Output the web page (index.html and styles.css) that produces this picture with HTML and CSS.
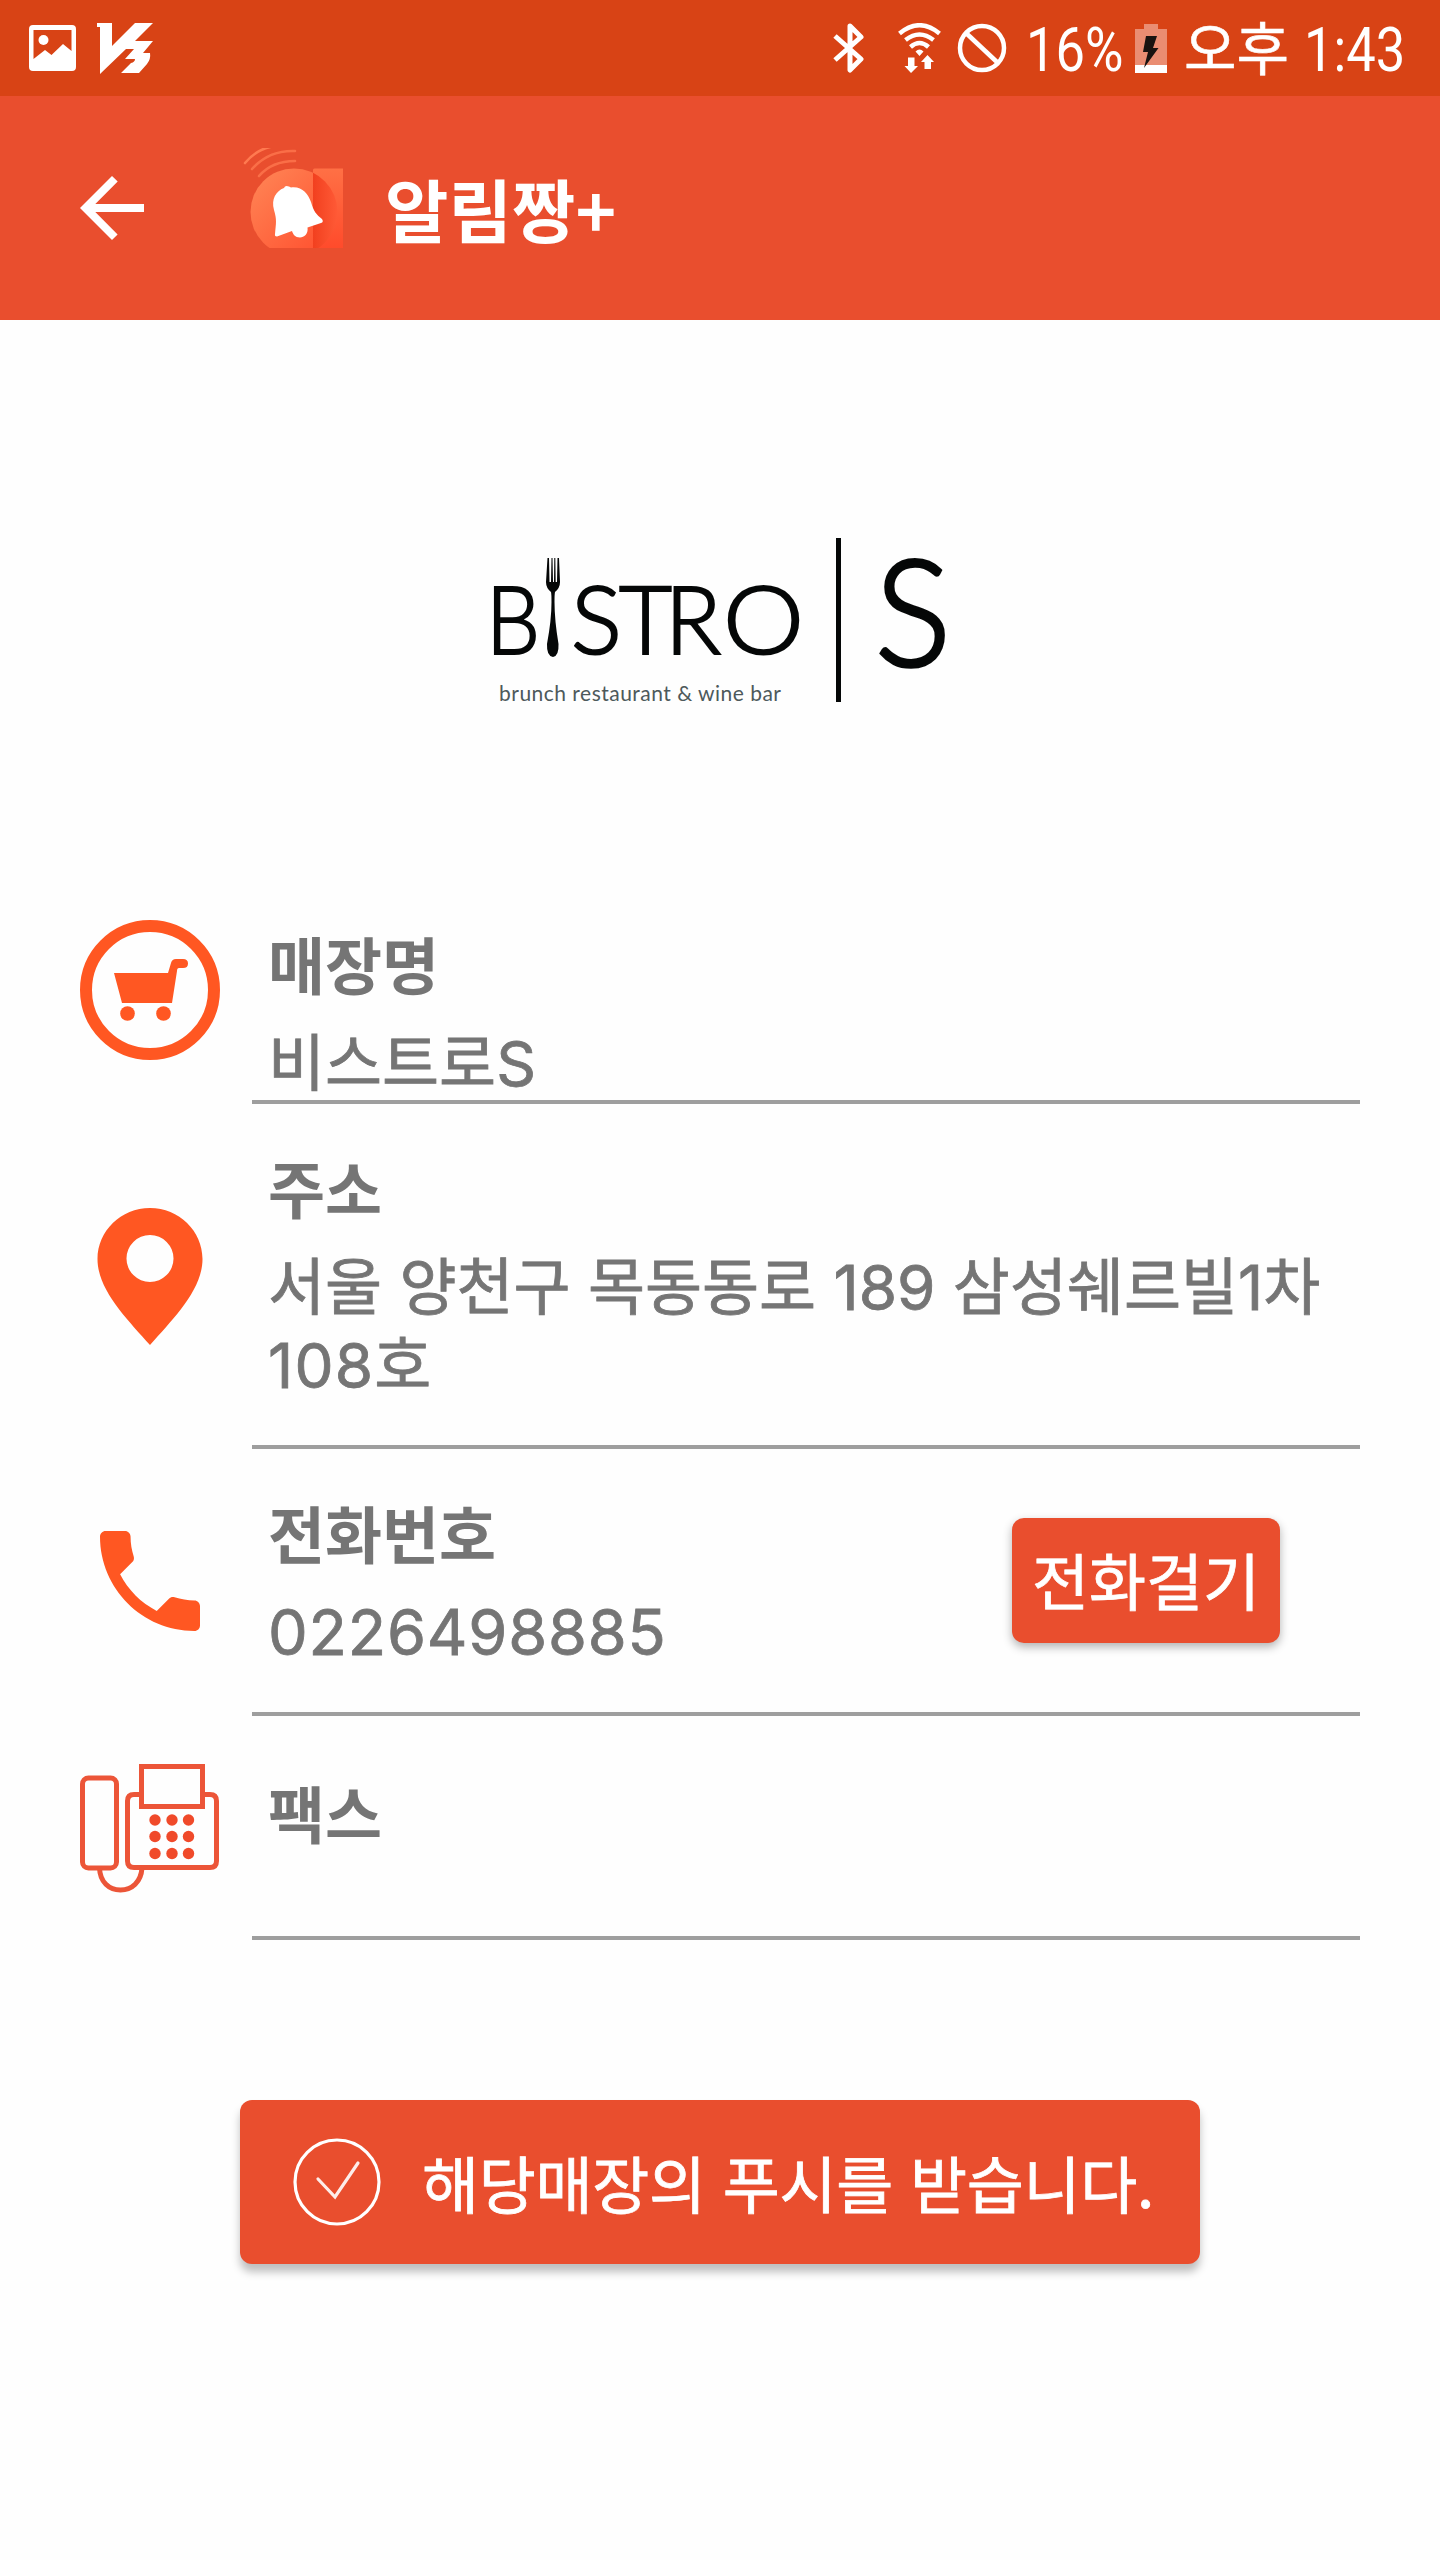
FILE: index.html
```html
<!DOCTYPE html>
<html lang="ko">
<head>
    <meta charset="UTF-8">
    <meta name="viewport" content="width=device-width, initial-scale=1.0">
    <title>알림짱+</title>
    <link rel="stylesheet" href="styles.css">
</head>
<body>

<div class="status-bar">
    <svg class="icon-picture" viewBox="0 0 47 46">
        <path fill="#fff" fill-rule="evenodd" d="M4 0H43Q47 0 47 4V42Q47 46 43 46H4Q0 46 0 42V4Q0 0 4 0ZM4.500 5V34L16 25L22.500 30L34 19L42.500 26V5Z"/>
        <circle cx="14.500" cy="15" r="5" fill="#fff"/>
    </svg>
    <svg class="icon-v3" viewBox="0 0 56 51">
        <path fill="#fff" d="M0 0H15V23L38 0H56L38 18H56L46 30L53 30Q54 36 50 41L42 50H24L34 40Q38 39 38 36H28L37 26H29L3 51V4H0Z"/>
    </svg>
    <div class="status-right">
        <svg class="icon-bluetooth" viewBox="0 0 32 50">
            <path d="M2 13L28 36L17 47V3L28 14L2 37" fill="none" stroke="#fff" stroke-width="5" stroke-linejoin="round"/>
        </svg>
        <svg class="icon-wifi" viewBox="0 0 43 50">
            <g fill="none" stroke="#fff" stroke-width="4.500">
                <path d="M1.500 10.500Q21.500 -6 41.500 10.500"/>
                <path d="M7.500 17Q21.500 6 35.500 17"/>
                <path d="M12.500 24Q21.500 16 30.500 24"/>
            </g>
            <path fill="#fff" d="M17.500 28.500Q21.500 24.500 25.500 28.500L21.500 33ZM10 34.500H16.500V43H20L13 50L6.500 43H10ZM26.500 46H33V39H36L29.500 32L23 39H26.500Z"/>
        </svg>
        <svg class="icon-block" viewBox="0 0 50 50">
            <g fill="none" stroke="#fff" stroke-width="4.500">
                <circle cx="25" cy="25" r="22"/>
                <path d="M9 10L41 40"/>
            </g>
        </svg>
        <span class="status-text battery-text"><span>16%</span></span>
        <svg class="icon-battery" viewBox="0 0 32 49">
            <path fill="#ea8d72" d="M9 0H23V5H32V49H0V5H9Z"/>
            <path fill="#fff" d="M0 41H32V49H0Z"/>
            <path fill="#1a1310" d="M11 12H22L18 24H23.500L9 44L13 28H8Z"/>
        </svg>
        <span class="status-text ampm">오후</span>
        <span class="status-text clock"><span>1:43</span></span>
    </div>
</div>

<div class="header">
    <svg class="icon-back" viewBox="0 0 64 64">
        <path fill="#fff" d="M64 28H15.300L37.700 5.600L32 0L0 32L32 64L37.600 58.400L15.300 36H64Z"/>
    </svg>
    <svg class="app-logo" viewBox="0 0 100 100">
        <defs>
            <linearGradient id="ball" x1="0" y1="0" x2="1" y2="1">
                <stop offset="0" stop-color="#ff8757"/>
                <stop offset="1" stop-color="#ff4b2b"/>
            </linearGradient>
            <linearGradient id="bar" x1="0" y1="0" x2="0" y2="1">
                <stop offset="0" stop-color="#ff7045"/>
                <stop offset="1" stop-color="#ff4b2b"/>
            </linearGradient>
            <linearGradient id="shade" x1="0.720" y1="0" x2="1" y2="0">
                <stop offset="0" stop-color="#f2401f"/>
                <stop offset="1" stop-color="#ff5a36"/>
            </linearGradient>
            <clipPath id="bar-clip"><rect x="70" y="20.500" width="30" height="80"/></clipPath>
        </defs>
        <g fill="none" stroke="#ff7a50" stroke-width="2.600" stroke-linecap="round">
            <path d="M2 15Q13 2 27 -1"/>
            <path d="M9 21Q26 2 52 3" opacity=".75"/>
            <path d="M16 28Q29 13 52 13" opacity=".75"/>
        </g>
        <circle cx="51" cy="64" r="43.500" fill="url(#ball)"/>
        <rect x="70" y="20.500" width="31" height="80" rx="1.500" fill="url(#bar)"/>
        <circle cx="51" cy="64" r="43.500" fill="url(#shade)" clip-path="url(#bar-clip)"/>
        <path fill="#fff" d="M41 40Q42 37 46 38.500L48 39.500C59 38 65 46 68 54C71 64 73 66 79 71Q81 74 78 75L64.500 79.500C65.500 86 61 89.500 57 89.500C52 89.500 50 86 49 83L34 88.500Q31.500 88.500 32 86C33 75 34 72 31 62C28 51 33 43 41 40Z"/>
    </svg>
    <h1>알림짱+</h1>
</div>

<div class="store-logo">
    <svg viewBox="0 0 500 220">
        <g class="logo-name">
            <text x="16" y="144" textLength="54" lengthAdjust="spacingAndGlyphs">B</text>
            <text x="101" y="144">S</text>
            <text x="149" y="144" textLength="53" lengthAdjust="spacingAndGlyphs">T</text>
            <text x="195" y="144" textLength="56" lengthAdjust="spacingAndGlyphs">R</text>
            <text x="253" y="144" textLength="81" lengthAdjust="spacingAndGlyphs">O</text>
        </g>
        <!-- fork in place of the letter I -->
        <path fill="#050707" d="M77.500 48L79 48L79.500 72H81L81.500 48H82.500L83 72H84L84.300 48H85.300L85.700 72H87L87.500 48H89L90 72Q90 78 85 82Q84.500 84 84.500 92Q84.500 110 88.500 134Q89 146 83 147Q76.500 146 77 134Q81.500 110 81.500 92Q81.500 84 81 82Q76 78 76 72Z"/>
        <rect x="366" y="28" width="5" height="164" fill="#050707"/>
        <text class="logo-initial" x="405" y="156" textLength="76" lengthAdjust="spacingAndGlyphs">S</text>
        <text class="logo-tagline" x="29" y="191" textLength="282">brunch restaurant &amp; wine bar</text>
    </svg>
</div>

<div class="info">
    <div class="row row-name">
        <div class="row-icon">
            <svg width="140" height="140" viewBox="0 0 140 140">
                <circle cx="70" cy="70" r="64" fill="none" stroke="#ff5722" stroke-width="12"/>
                <path fill="#ff5722" d="M34 53H88L91 43Q92 39 96 39H103Q108 39 108 43.500Q108 48 103 48H99Q97 48 97 51L92 83H42Z"/>
                <circle cx="47.500" cy="93.500" r="7.300" fill="#ff5722"/>
                <circle cx="83.500" cy="93.500" r="7.300" fill="#ff5722"/>
            </svg>
        </div>
        <div class="row-body">
            <div class="label">매장명</div>
            <div class="value">비스트로<span class="letter">S</span></div>
        </div>
    </div>

    <div class="row row-address">
        <div class="row-icon">
            <svg width="140" height="140" viewBox="0 0 140 140">
                <path fill="#ff5722" fill-rule="evenodd" d="M70 3C41 3 17.500 26 17.500 54C17.500 85 47 114 70 140C93 114 122.500 85 122.500 54C122.500 26 99 3 70 3ZM70 30A23.500 23.500 0 1 1 70 77A23.500 23.500 0 1 1 70 30Z"/>
            </svg>
        </div>
        <div class="row-body">
            <div class="label">주소</div>
            <div class="value">서울 양천구 목동동로 <span class="num">189</span> 삼성쉐르빌<span class="num">1</span>차<br><span class="num unit-num">108</span>호</div>
        </div>
    </div>

    <div class="row row-phone">
        <div class="row-icon">
            <svg width="100" height="100" viewBox="3 3 18 18">
                <path fill="#ff5722" d="M6.620 10.790c1.440 2.830 3.760 5.140 6.590 6.590l2.200-2.200c.27-.27.67-.36 1.020-.24 1.120.37 2.330.57 3.570.57.55 0 1 .45 1 1V20c0 .55-.45 1-1 1-9.390 0-17-7.610-17-17 0-.55.45-1 1-1h3.500c.55 0 1 .45 1 1 0 1.250.2 2.450.57 3.570.11.35.03.74-.25 1.020l-2.200 2.200z"/>
            </svg>
        </div>
        <div class="row-body">
            <div class="phone-text">
                <div class="label">전화번호</div>
                <div class="value"><span class="num phone-num">0226498885</span></div>
            </div>
            <button class="call-btn">전화걸기</button>
        </div>
    </div>

    <div class="row row-fax">
        <div class="row-icon">
            <svg width="140" height="140" viewBox="0 0 140 140">
                <g fill="none" stroke="#ec5538" stroke-width="5">
                    <rect x="2.500" y="22" width="34" height="90" rx="6"/>
                    <path d="M60 38.500H54Q47.500 38.500 47.500 45V105Q47.500 111.500 54 111.500H130Q136.500 111.500 136.500 105V45Q136.500 38.500 130 38.500H123"/>
                    <rect x="61.500" y="10.500" width="61" height="40"/>
                    <path d="M19.500 112C20 126 29 134 40.500 134C52 134 61 126 62 112"/>
                </g>
                <g fill="#f04a2a">
                    <circle cx="75" cy="64" r="5.700"/><circle cx="92" cy="64" r="5.700"/><circle cx="108.500" cy="64" r="5.700"/>
                    <circle cx="75" cy="80.500" r="5.700"/><circle cx="92" cy="80.500" r="5.700"/><circle cx="108.500" cy="80.500" r="5.700"/>
                    <circle cx="75" cy="97.500" r="5.700"/><circle cx="92" cy="97.500" r="5.700"/><circle cx="108.500" cy="97.500" r="5.700"/>
                </g>
            </svg>
        </div>
        <div class="row-body">
            <div class="label">팩스</div>
        </div>
    </div>
</div>

<button class="push-btn">
    <svg width="90" height="90" viewBox="0 0 90 90">
        <g fill="none" stroke="#fff" stroke-width="3.200">
            <circle cx="45" cy="45" r="42"/>
            <path d="M26 42L43 60L66 26" stroke-linecap="round" opacity=".9"/>
        </g>
    </svg>
    <span>해당매장의 푸시를 받습니다.</span>
</button>

</body>
</html>
```
FILE: styles.css
```css
* {
    box-sizing: border-box;
}
body {
    margin: 0;
    min-height: 2560px;
    background-color: #fefefe;
    font-family: "Noto Sans CJK KR", sans-serif;
    color: #757575;
}
svg {
    display: block;
    flex-shrink: 0;
}

/* 상태바 */
.status-bar {
    display: flex;
    align-items: center;
    height: 96px;
    padding: 0 36px 0 29px;
    background-color: #d84315;
    color: #fff;
}
.icon-picture {
    width: 47px;
    height: 46px;
}
.icon-v3 {
    width: 56px;
    height: 51px;
    margin-left: 21px;
}
.status-right {
    display: flex;
    align-items: center;
    margin-left: auto;
}
.icon-bluetooth {
    width: 32px;
    height: 50px;
    margin-right: 33px;
}
.icon-wifi {
    width: 43px;
    height: 50px;
    margin-right: 16px;
}
.icon-block {
    width: 50px;
    height: 50px;
    margin-right: 19px;
}
.icon-battery {
    width: 32px;
    height: 49px;
    margin-right: 17px;
}
.status-text {
    padding-top: 5px;
    font-family: Roboto, "Noto Sans CJK KR", sans-serif;
    font-size: 61px;
    line-height: 91px;
    white-space: nowrap;
}
.status-text span {
    display: inline-block;
    transform: scaleX(0.86);
    transform-origin: left;
}
.battery-text {
    width: 109px;
}
.ampm {
    width: 120px;
    font-size: 57px;
    -webkit-text-stroke: 0.6px #fff;
}
.clock {
    width: 100px;
}

/* 헤더 */
.header {
    display: flex;
    align-items: center;
    height: 224px;
    padding-left: 80px;
    background-color: #e94e2e;
    color: #fff;
}
.icon-back {
    width: 64px;
    height: 64px;
}
.app-logo {
    width: 100px;
    height: 100px;
    margin: 0 0 20px 99px;
}
.header h1 {
    margin: 0 0 0 42px;
    font-size: 69px;
    font-weight: 700;
    line-height: 100px;
}

/* 매장 로고 */
.store-logo {
    display: flex;
    justify-content: center;
    height: 560px;
    padding-top: 190px;
}
.store-logo svg {
    width: 500px;
    height: 220px;
}
.store-logo text {
    font-family: Lato, sans-serif;
    fill: #050707;
}
.store-logo .logo-name {
    font-size: 95px;
    font-weight: 300;
    stroke: #050707;
    stroke-width: 2.2px;
}
.store-logo .logo-initial {
    font-size: 149px;
    font-weight: 300;
    stroke: #050707;
    stroke-width: 3.6px;
}
.store-logo .logo-tagline {
    font-size: 21px;
    fill: #4d595b;
}

/* 매장 정보 */
.info {
    padding: 0 80px;
}
.row {
    display: flex;
}
.row-name, .row-fax {
    height: 224px;
}
.row-address {
    height: 345px;
}
.row-phone {
    height: 267px;
}
.row-icon {
    display: flex;
    align-items: center;
    justify-content: center;
    width: 140px;
    margin-right: 32px;
    padding-bottom: 4px;
}
.row-body {
    flex: 1;
    padding: 44px 0 0 16px;
    border-bottom: 4px solid #9e9e9e;
}
.row-fax .row-body {
    padding-top: 57px;
}
.label, .value {
    font-size: 62px;
    line-height: 78px;
    white-space: nowrap;
}
.label {
    font-weight: 700;
    margin-bottom: 18px;
}
.value {
    -webkit-text-stroke: 0.8px #757575;
}
.num, .letter {
    font-family: Inter, sans-serif;
    line-height: 1;
}
.unit-num {
    letter-spacing: 1.2px;
}
.phone-num {
    font-size: 63px;
    letter-spacing: 0.8px;
}
.row-phone .row-body {
    display: flex;
    justify-content: space-between;
    padding-right: 80px;
}
button {
    border: none;
    border-radius: 12px;
    background-color: #e94e2e;
    color: #fff;
    font-family: "Noto Sans CJK KR", sans-serif;
    font-size: 62px;
    -webkit-text-stroke: 0.8px #fff;
    cursor: pointer;
}
.call-btn {
    width: 268px;
    height: 125px;
    margin-top: 25px;
    padding: 0 0 3px;
    box-shadow: 0 4px 10px rgba(0, 0, 0, 0.3);
}
.push-btn {
    display: flex;
    align-items: center;
    width: 960px;
    height: 164px;
    margin: 160px auto 0;
    padding: 0 0 0 52px;
    box-shadow: 0 8px 8px rgba(0, 0, 0, 0.25);
}
.push-btn span {
    margin-left: 40px;
    letter-spacing: -0.3px;
    white-space: nowrap;
}
```
